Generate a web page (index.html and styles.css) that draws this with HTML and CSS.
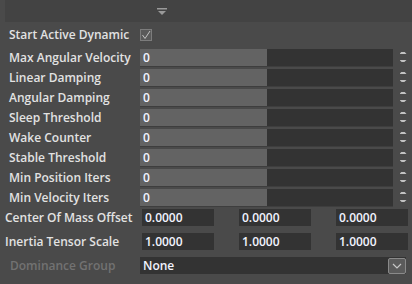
FILE: index.html
```html
<!DOCTYPE html>
<html lang="en">
<head>
    <meta charset="UTF-8">
    <title>Rigid Body Properties</title>
    <link rel="stylesheet" href="styles.css">
</head>
<body>

<div class="panel">
    <div class="header">
        <svg class="collapse" width="10" height="7" viewBox="0 0 10 7">
            <rect x="0" y="0" width="10" height="1.5" fill="#9a9a9a"/>
            <polygon points="1,3 9,3 5,7" fill="#9a9a9a"/>
        </svg>
    </div>

    <div class="row row-check">
        <div class="label">Start Active Dynamic</div>
        <div class="checkbox">
            <svg width="10" height="10" viewBox="0 0 10 10">
                <polyline points="1.5,5 4,8.5 9,1" fill="none" stroke="#c4c4c4" stroke-width="1"/>
            </svg>
        </div>
    </div>

    <div class="row">
        <div class="label">Max Angular Velocity</div>
        <div class="slider"><div class="fill"></div><span class="value">0</span></div>
        <div class="spinner"><i class="up"></i><i class="down"></i></div>
    </div>
    <div class="row">
        <div class="label">Linear Damping</div>
        <div class="slider"><div class="fill"></div><span class="value">0</span></div>
        <div class="spinner"><i class="up"></i><i class="down"></i></div>
    </div>
    <div class="row">
        <div class="label">Angular Damping</div>
        <div class="slider"><div class="fill"></div><span class="value">0</span></div>
        <div class="spinner"><i class="up"></i><i class="down"></i></div>
    </div>
    <div class="row">
        <div class="label">Sleep Threshold</div>
        <div class="slider"><div class="fill"></div><span class="value">0</span></div>
        <div class="spinner"><i class="up"></i><i class="down"></i></div>
    </div>
    <div class="row">
        <div class="label">Wake Counter</div>
        <div class="slider"><div class="fill"></div><span class="value">0</span></div>
        <div class="spinner"><i class="up"></i><i class="down"></i></div>
    </div>
    <div class="row">
        <div class="label">Stable Threshold</div>
        <div class="slider"><div class="fill"></div><span class="value">0</span></div>
        <div class="spinner"><i class="up"></i><i class="down"></i></div>
    </div>
    <div class="row">
        <div class="label">Min Position Iters</div>
        <div class="slider"><div class="fill"></div><span class="value">0</span></div>
        <div class="spinner"><i class="up"></i><i class="down"></i></div>
    </div>
    <div class="row">
        <div class="label">Min Velocity Iters</div>
        <div class="slider"><div class="fill"></div><span class="value">0</span></div>
        <div class="spinner"><i class="up"></i><i class="down"></i></div>
    </div>

    <div class="row row-vector">
        <div class="label label-wide">Center Of Mass Offset</div>
        <div class="vector">
            <div class="field">0.0000</div>
            <div class="field">0.0000</div>
            <div class="field">0.0000</div>
        </div>
    </div>
    <div class="row row-vector">
        <div class="label label-wide">Inertia Tensor Scale</div>
        <div class="vector">
            <div class="field">1.0000</div>
            <div class="field">1.0000</div>
            <div class="field">1.0000</div>
        </div>
    </div>

    <div class="row row-combo">
        <div class="label label-disabled">Dominance Group</div>
        <div class="combo">
            <span class="value">None</span>
            <div class="combo-btn">
                <svg width="10" height="6" viewBox="0 0 10 6">
                    <polyline points="1,1 5,5 9,1" fill="none" stroke="#c8c8c8" stroke-width="1.2"/>
                </svg>
            </div>
        </div>
    </div>
</div>

</body>
</html>
```

FILE: styles.css
```css
body {
    margin: 0;
    background-color: #4a4a4a;
    font-family: "Open Sans", "Noto Sans", sans-serif;
    font-size: 12px;
    font-weight: 600;
    color: #e2e2e2;
}
.panel {
    width: 412px;
    height: 284px;
    overflow: hidden;
}
.header {
    height: 22px;
    margin-left: 5px;
    background-color: #434343;
    display: flex;
    align-items: center;
    padding-left: 152px;
}
.collapse {
    display: block;
}
.row {
    display: flex;
    height: 20px;
    padding-top: 1px;
    box-sizing: border-box;
    align-items: flex-start;
}
.label {
    width: 131px;
    padding-left: 9px;
    height: 17px;
    line-height: 17px;
    white-space: nowrap;
}
.label-wide {
    width: 136px;
    padding-left: 5px;
}
.label-disabled {
    color: #727272;
    padding-left: 10px;
    width: 130px;
}
.row-check {
    height: 22px;
    margin-top: 2px;
    margin-bottom: 2px;
    padding-top: 0;
    align-items: center;
}
.row-check .label {
    line-height: 22px;
    height: 22px;
}
.checkbox {
    width: 10px;
    height: 10px;
    border: 1px solid #7c7c7c;
    background-color: #5a5a5a;
    display: flex;
}
.slider {
    position: relative;
    width: 253px;
    height: 17px;
    background-color: #333333;
    box-shadow: 0 1px 0 #3e3e3e;
}
.fill {
    position: absolute;
    left: 0;
    top: 0;
    bottom: 0;
    width: 127px;
    background-color: #636363;
}
.value {
    position: relative;
    padding-left: 3px;
    line-height: 17px;
    color: #f2f4ff;
}
.spinner {
    width: 19px;
    height: 17px;
    display: flex;
    flex-direction: column;
    align-items: center;
    padding-top: 3px;
    box-sizing: border-box;
}
.spinner i {
    display: block;
    width: 7px;
    height: 2px;
    background-color: #c2c2c2;
    margin-left: 1px;
}
.spinner .up {
    clip-path: polygon(25% 0, 75% 0, 100% 100%, 0 100%);
}
.spinner .down {
    margin-top: 6px;
    clip-path: polygon(0 0, 100% 0, 70% 100%, 30% 100%);
}
.row-vector {
    height: 24px;
}
.vector {
    display: grid;
    grid-template-columns: repeat(3, 72px);
    column-gap: 25px;
    margin-left: 1px;
}
.field {
    height: 17px;
    line-height: 17px;
    background-color: #333333;
    padding-left: 3px;
    color: #f2f4ff;
}
.combo {
    width: 266px;
    height: 17px;
    background-color: #333333;
    display: flex;
    align-items: center;
    justify-content: space-between;
}
.combo .value {
    padding-left: 3px;
}
.combo-btn {
    width: 16px;
    height: 14px;
    border: 1px solid #8a8a8a;
    border-radius: 2px;
    background-color: #5b5b5b;
    display: flex;
    align-items: center;
    justify-content: center;
}
```
